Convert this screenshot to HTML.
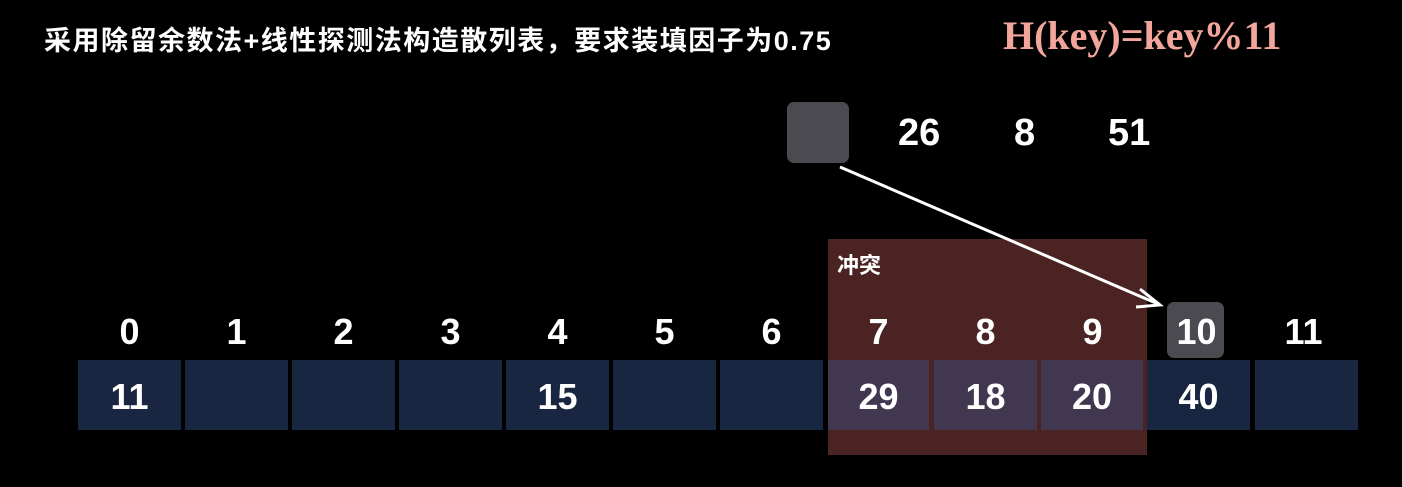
<!DOCTYPE html>
<html><head><meta charset="utf-8"><style>
body{margin:0;width:1402px;height:487px;background:#000;position:relative;overflow:hidden;font-family:"Liberation Sans","Noto Sans CJK SC",sans-serif;color:#fff}
.a{position:absolute}
.title{left:44px;top:19px;font-size:27px;font-weight:bold;white-space:nowrap;letter-spacing:1.5px}
.h{left:1003px;top:12px;font-family:"Liberation Serif",serif;font-weight:bold;font-size:40px;color:#f2a69b;white-space:nowrap}
.c{top:360px;width:103px;height:70px;background:#182641;text-align:center;line-height:74px;font-size:36px;font-weight:bold}
.p{background:#413751}
.i{top:310px;width:103px;text-align:center;font-size:36px;font-weight:bold;line-height:44px}
.n{top:111px;font-size:38px;font-weight:bold;line-height:44px}
</style></head><body>
<div class="a title">采用除留余数法+线性探测法构造散列表，要求装填因子为0.75</div>
<div class="a h">H(key)=key%11</div>
<div class="a" style="left:787px;top:102px;width:62px;height:61px;background:#4a4a50;border-radius:7px"></div>
<div class="a n" style="left:898px">26</div>
<div class="a n" style="left:1014px">8</div>
<div class="a n" style="left:1108px">51</div>
<div class="a" style="left:828px;top:239px;width:319px;height:216px;background:#4a2322"></div>
<div class="a" style="left:837px;top:248px;font-size:22px;font-weight:bold">冲突</div>
<div class="a" style="left:1167px;top:302px;width:57px;height:56px;background:#4a4a50;border-radius:7px"></div>
<div class="a i" style="left:78px">0</div>
<div class="a i" style="left:185px">1</div>
<div class="a i" style="left:292px">2</div>
<div class="a i" style="left:399px">3</div>
<div class="a i" style="left:506px">4</div>
<div class="a i" style="left:613px">5</div>
<div class="a i" style="left:720px">6</div>
<div class="a i" style="left:827px">7</div>
<div class="a i" style="left:934px">8</div>
<div class="a i" style="left:1041px">9</div>
<div class="a i" style="left:1145px">10</div>
<div class="a i" style="left:1252px">11</div>
<div class="a c" style="left:78px">11</div>
<div class="a c" style="left:185px"></div>
<div class="a c" style="left:292px"></div>
<div class="a c" style="left:399px"></div>
<div class="a c" style="left:506px">15</div>
<div class="a c" style="left:613px"></div>
<div class="a c" style="left:720px"></div>
<div class="a c p" style="left:828px;width:101px">29</div>
<div class="a c p" style="left:934px">18</div>
<div class="a c p" style="left:1041px;width:102px">20</div>
<div class="a c" style="left:1147px">40</div>
<div class="a c" style="left:1255px"></div>
<svg class="a" style="left:0;top:0" width="1402" height="487">
<line x1="840" y1="167" x2="1158" y2="304" stroke="#fff" stroke-width="3"/>
<polyline points="1140,289 1160,305 1136,307" fill="none" stroke="#fff" stroke-width="3"/>
</svg>
</body></html>
